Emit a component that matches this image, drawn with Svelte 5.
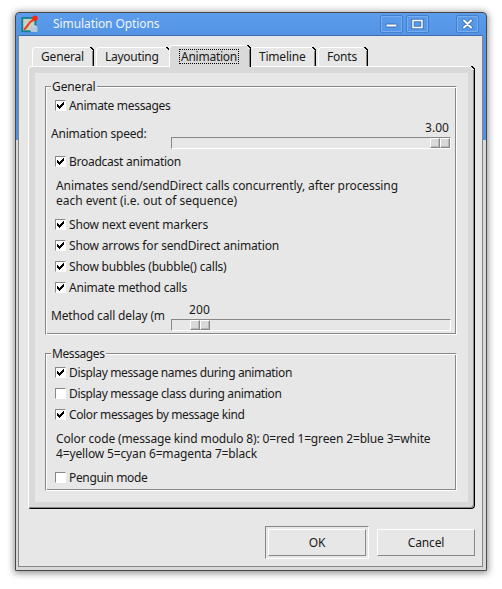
<script>
  const tabs = [
    { name: 'General', w: 62, text: 43 },
    { name: 'Layouting', w: 73, text: 53.5 },
    { name: 'Animation', w: 82, text: 56, active: true },
    { name: 'Timeline', w: 65, text: 46.5 },
    { name: 'Fonts', w: 50, text: 30 }
  ];

  let general = $state([
    { label: 'Show next event markers', w: 139 },
    { label: 'Show arrows for sendDirect animation', w: 210 },
    { label: 'Show bubbles (bubble() calls)', w: 157.5 },
    { label: 'Animate method calls', w: 118 }
  ]);
  let messages = $state([
    { label: 'Display message names during animation', w: 223, on: true },
    { label: 'Display message class during animation', w: 212.5, on: false },
    { label: 'Color messages by message kind', w: 175.5, on: true }
  ]);

  // Spreads the letters of a label over its nominal width.
  function fit(node, width) {
    const n = node.textContent.length;
    const natural = node.getBoundingClientRect().width;
    node.style.letterSpacing = `${(width - natural) / n}px`;
  }
</script>

{#snippet txt(s, w)}<span class="txt" use:fit={w}>{s}</span>{/snippet}

{#snippet check(label, w, on)}
  <div class="check">
    <span class="box">
      {#if on}
        <svg width="9" height="9" viewBox="0 0 9 9" shape-rendering="crispEdges">
          <path d="M1 3h1v1h1v1h1v-1h1v-1h1v-1h1v-1h1v3h-1v1h-1v1h-1v1h-1v1h-1v-1h-1v-1h-1z" fill="#000" />
        </svg>
      {/if}
    </span>
    {@render txt(label, w)}
  </div>
{/snippet}

{#snippet scale(value, w, pad, thumb)}
  <div class="scale">
    <div class="value" style:padding-left="{pad}px">{@render txt(value, w)}</div>
    <div class="track"><span class="thumb" style:margin-left="{thumb}px"><i></i><i></i></span></div>
  </div>
{/snippet}

<div class="desktop">
  <div class="window">
    <header>
      <svg class="app" width="18" height="18" viewBox="0 0 18 18">
        <rect x="1.3" y="3" width="13" height="13.2" fill="#c9d1c5" stroke="#12828a" stroke-width="1.8" />
        <path d="M3 14.5C7 12 7 7 13 4.5" fill="none" stroke="#ef3b16" stroke-width="2" />
        <circle cx="14" cy="3.2" r="2.7" fill="#fb260d" />
        <rect x="9.5" y="11.5" width="7" height="5.5" rx="1" fill="#b5c7dc" />
        <path d="M11 12.2q0-2 2.4-2t2.6 2" fill="#cbd6e2" />
      </svg>
      <span class="title">{@render txt('Simulation Options', 106.5)}</span>
      <span class="wb">
        <svg width="21" height="16" viewBox="0 0 21 16"><rect x="5" y="8" width="11" height="3" rx="1" fill="#fff" stroke="#3c6fb4" /></svg>
      </span>
      <span class="wb">
        <svg width="21" height="16" viewBox="0 0 21 16"><rect x="6" y="4.5" width="9" height="7" fill="none" stroke="#3c6fb4" stroke-width="3.2" /><rect x="6" y="4.5" width="9" height="7" fill="none" stroke="#fff" stroke-width="1.5" /></svg>
      </span>
      <span class="wb close">
        <svg width="21" height="16" viewBox="0 0 21 16"><path d="M7 4.5l7 7m0-7l-7 7" stroke="#3c6fb4" stroke-width="3.6" stroke-linecap="round" /><path d="M7 4.5l7 7m0-7l-7 7" stroke="#fff" stroke-width="2" stroke-linecap="round" /></svg>
      </span>
    </header>

    <main>
      <nav>
        {#each tabs as t}
          <div class="tab" class:active={t.active} style:width="{t.w}px">
            <span class="tl">{@render txt(t.name, t.text)}</span>
            <svg class="corner" width="4" height="4" viewBox="0 0 4 4" shape-rendering="crispEdges"><path d="M0 0h4v4h-4z" fill="#e7e7e7" /><path d="M0 0h2v1h1v1h1v2h-1v-1h-1v-1h-1v-1h-1z" fill="#000" /></svg>
          </div>
        {/each}
      </nav>

      <div class="panel">
        <svg class="corner" width="4" height="4" viewBox="0 0 4 4" shape-rendering="crispEdges"><path d="M0 0h4v4h-4z" fill="#e7e7e7" /><path d="M0 0h2v1h1v1h1v2h-1v-1h-1v-1h-1v-1h-1z" fill="#000" /></svg>
        <div class="page">
          <section class="group g1">
            <h2>{@render txt('General', 43.5)}</h2>
            {@render check('Animate messages', 101.5, true)}
            <div class="row speed">
              <span class="name">{@render txt('Animation speed:', 95.5)}</span>
              {@render scale('3.00', 24, 254, 258)}
            </div>
            {@render check('Broadcast animation', 112, true)}
            <p>
              {@render txt('Animates send/sendDirect calls concurrently, after processing', 342)}<br />
              {@render txt('each event (i.e. out of sequence)', 181)}
            </p>
            {#each general as c}{@render check(c.label, c.w, true)}{/each}
            <div class="row delay">
              <span class="name">{@render txt('Method call delay (ms):', 126)}</span>
              {@render scale('200', 21, 18, 18)}
            </div>
          </section>

          <section class="group g2">
            <h2>{@render txt('Messages', 52.5)}</h2>
            {#each messages as c}{@render check(c.label, c.w, c.on)}{/each}
            <p>
              {@render txt('Color code (message kind modulo 8): 0=red 1=green 2=blue 3=white', 374.5)}<br />
              {@render txt('4=yellow 5=cyan 6=magenta 7=black', 201)}
            </p>
            {@render check('Penguin mode', 78.5, false)}
          </section>
        </div>
      </div>

      <footer>
        <div class="default"><button>{@render txt('OK', 16.5)}</button></div>
        <button>{@render txt('Cancel', 36.5)}</button>
      </footer>
    </main>
  </div>
</div>

<style>
  :global(body) { background: #fff; }
  .desktop {
    box-sizing: border-box;
    width: 502px;
    height: 589px;
    padding: 12px 15px 18px;
    font: 12px/15px "Noto Sans", "Open Sans", sans-serif;
    color: #1a1a1a;
    overflow: hidden;
  }
  .txt { white-space: nowrap; display: inline-block; }
  .window {
    box-sizing: border-box;
    width: 472px;
    height: 559px;
    border: 1px solid #484848;
    border-radius: 4px 4px 0 0;
    padding: 0 3px 3px 2px;
    background: linear-gradient(#5c9cec, #5394e4 22px, #5292e2 127px, #d8d8d8 127px);
    box-shadow: 0 1px 7px 1px rgba(0, 0, 0, 0.45);
  }
  header { display: flex; height: 22px; padding: 2px 3px 0 3px; box-sizing: border-box; }
  .app { flex: none; }
  .title { flex: 1; padding: 1px 0 0 14px; color: #eff5fb; }
  .wb { box-sizing: border-box; width: 23px; height: 18px; border: 1px solid #4380cb; box-shadow: inset 0 0 0 1px #76aef1; border-radius: 2px; margin-right: 3px; }
  .wb svg { display: block; }
  .close { margin-left: 24px; margin-right: 1px; }
  main {
    box-sizing: border-box;
    height: 532px;
    border: 1px solid #868686;
    border-top-color: #3b6daa;
    background: #e7e7e7;
    padding: 9px 8px 0 9px;
  }
  nav { display: flex; align-items: flex-end; height: 21px; padding-left: 4px; }
  .tab {
    box-sizing: border-box;
    position: relative;
    height: 19px;
    border: 1px solid #fff;
    border-right: 1px solid #000;
    border-bottom: 0;
    border-radius: 4px 0 0 0;
    box-shadow: inset -1px 0 #888;
    padding: 1px 0 0 8px;
    margin-right: 2px;
  }
  .tab:nth-child(2) { border-right: 0; box-shadow: none; margin-right: 0; }
  .tab.active { height: 22px; margin-bottom: -1px; background: #d9d9d9; z-index: 1; padding: 3px 0 0 9px; margin-right: 0; }
  .tab:nth-child(4) { border-left: 0; }
  .active .tl { display: inline-block; height: 15px; line-height: 15px; padding: 0 2px; outline: 1px dotted #000; outline-offset: -1px; }
  .corner { position: absolute; right: -1px; top: -1px; }
  .panel {
    position: relative;
    box-sizing: border-box;
    width: 447px;
    height: 443px;
    border: 1px solid #fff;
    border-right-color: #000;
    border-bottom-color: #000;
    border-radius: 4px 0 4px 3px;
    box-shadow: inset -1px -1px #888;
    background: #d9d9d9;
    padding: 6px;
  }
  .page { box-sizing: border-box; width: 433px; height: 429px; background: #e7e7e7; padding: 13px 10px 0 10px; }
  .group {
    box-sizing: border-box;
    width: 412px;
    border: 1px solid #888;
    border-right-color: #fff;
    border-bottom-color: #fff;
    box-shadow: inset 1px 1px #fff, inset -1px -1px #888;
  }
  .g1 { height: 249px; }
  .g2 { height: 138px; margin-top: 18px; }
  h2 { font: inherit; margin: -8px 0 0 5px; padding: 0 1px; width: max-content; height: 15px; background: #e7e7e7; }
  .check { display: flex; align-items: center; height: 21px; padding-left: 9px; gap: 3px; }
  h2 + .check { margin-top: 1px; }
  .box { box-sizing: border-box; width: 11px; height: 11px; background: #fff; border: 1px solid #888; border-right-color: #fff; border-bottom-color: #fff; }
  .box svg { display: block; }
  .row { display: flex; gap: 6px; padding-left: 5px; height: 35px; box-sizing: border-box; }
  .speed { padding-top: 5px; }
  .delay { padding-top: 5px; }
  .name { width: 114px; overflow: hidden; padding-top: 5px; }
  .scale { width: 280px; }
  .value { height: 16px; margin-top: -1px; padding-top: 0; }
  .track { box-sizing: border-box; height: 12px; margin-top: 1px; border: 1px solid #888; border-right-color: #fff; border-bottom-color: #fff; }
  .thumb { display: flex; width: 20px; height: 10px; }
  .thumb i { box-sizing: border-box; width: 10px; height: 10px; background: #d9d9d9; border: 1px solid #fff; border-right-color: #888; border-bottom-color: #888; box-shadow: inset -1px -1px #b8b8b8; }
  p { margin: 6px 0 6px 10px; height: 30px; }
  footer { display: flex; gap: 8px; justify-content: flex-end; align-items: center; padding-top: 17px; height: 33px; margin-right: -1px; }
  button {
    box-sizing: border-box;
    width: 98px;
    height: 27px;
    padding: 0;
    border: 1px solid #fff;
    border-right-color: #888;
    border-bottom-color: #888;
    border-radius: 0;
    background: #e7e7e7;
    color: #1a1a1a;
    font: inherit;
  }
  .default { padding: 2px; border: 1px solid #888; border-right-color: #fff; border-bottom-color: #fff; }
</style>
